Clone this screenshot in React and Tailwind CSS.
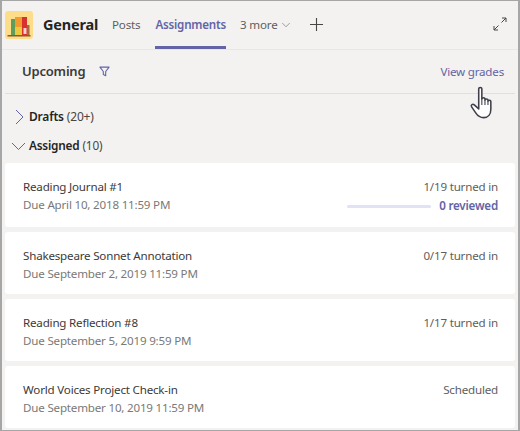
import { ChevronDown } from 'lucide-react';

const assignments = [
  { title: 'Reading Journal #1', due: 'Due April 10, 2018 11:59 PM', status: '1/19 turned in', reviewed: '0 reviewed' },
  { title: 'Shakespeare Sonnet Annotation', due: 'Due September 2, 2019 11:59 PM', status: '0/17 turned in' },
  { title: 'Reading Reflection #8', due: 'Due September 5, 2019 9:59 PM', status: '1/17 turned in' },
  { title: 'World Voices Project Check-in', due: 'Due September 10, 2019 11:59 PM', status: 'Scheduled' },
];

const BooksLogo = () => (
  <svg viewBox="0 0 28 28" className="w-[28px] h-[28px]">
    <rect width="28" height="28" rx="3" fill="#fedd8a" />
    <rect x="6" y="8" width="4" height="16" fill="#5f9e5a" />
    <rect x="10" y="6" width="7" height="18" fill="#f39a2e" />
    <rect x="10" y="16" width="7" height="8" fill="#ecc83c" />
    <rect x="17" y="6" width="5" height="18" fill="#d8322e" />
    <rect x="18.5" y="17" width="3" height="6" fill="#f4d0c8" />
    <rect x="22" y="14" width="2.5" height="10" fill="#a5683c" />
    <rect x="2.5" y="24" width="23" height="1.5" fill="#8a5a34" />
  </svg>
);

const FilterIcon = () => (
  <svg viewBox="0 0 12 12" fill="none" stroke="#6264a7" strokeWidth="1.2" className="w-[11px] h-[11px]">
    <path d="M1 1.2h10L7.3 6v4.6L4.7 9.4V6z" strokeLinejoin="round" />
  </svg>
);

const ExpandIcon = () => (
  <svg viewBox="0 0 14 14" fill="none" stroke="#484644" strokeWidth="1" className="w-[14px] h-[14px]">
    <path d="M8.5 5.5L13 1M9 1h4v4M5.5 8.5L1 13M1 9v4h4" />
  </svg>
);

const PlusIcon = () => (
  <svg viewBox="0 0 13 13" fill="none" stroke="#484644" strokeWidth="1.1" className="w-[13px] h-[13px]">
    <path d="M6.5 0v13M0 6.5h13" />
  </svg>
);

const TwistyRight = () => (
  <svg viewBox="0 0 9 16" fill="none" stroke="#6264a7" strokeWidth="1" className="w-[9px] h-[16px]">
    <path d="M1 1l7 7-7 7" />
  </svg>
);

const TwistyDown = () => (
  <svg viewBox="0 0 15 9" fill="none" stroke="#6264a7" strokeWidth="1" className="w-[15px] h-[9px]">
    <path d="M1 1l6.5 6.5L14 1" />
  </svg>
);

const HandCursor = () => (
  <svg viewBox="0 0 24 30" className="absolute left-[467px] top-[84px] w-[30px] h-[36px]">
    <path
      d="M7.6 3.2c0-1.4 2.6-1.4 2.6 0v8.4c0-1.3 2.6-1.3 2.6 0v1c0-1.3 2.5-1.3 2.5 0v1c0-1.2 2.4-1.2 2.4.2v6.4c0 4-2.2 7-6 7-3.4 0-5-1.6-6.6-4l-3.4-5c-1-1.5.9-2.8 2.2-1.6l3.7 3.3z"
      fill="#ffffff"
      stroke="#3f3f4b"
      strokeWidth="1.3"
      strokeLinejoin="round"
    />
    <path d="M10.2 11.6v5M12.8 12.6v4M15.3 13.6v3" stroke="#3f3f4b" strokeWidth="0.9" fill="none" />
  </svg>
);

const AssignmentCard = ({ item, tall }) => (
  <div className={`bg-white rounded-[3px] pl-[18px] pr-[17px] pt-[15px] flex justify-between ${tall ? 'h-[64px]' : 'h-[62px]'}`}>
    <div className="leading-[18px] text-[11.6px]">
      <div className="text-[#3b3a39]">{item.title}</div>
      <div className="text-[#7a7977]">{item.due}</div>
    </div>
    <div className="flex flex-col items-end leading-[18px] text-[11.6px] text-[#605e5c]">
      <div>{item.status}</div>
      {item.reviewed && (
        <div className="flex items-center gap-[8px] mt-[1px]">
          <div className="w-[84px] h-[3px] rounded-full bg-[#e2e2f6]"></div>
          <span className="font-semibold text-[#6264a7]">{item.reviewed}</span>
        </div>
      )}
    </div>
  </div>
);

export default function App() {
  return (
    <div className="relative w-[520px] h-[431px] overflow-hidden bg-[#f3f2f1] border border-[#a6a6a6] border-l-2 border-r-2 tracking-[-0.2px] font-['Noto_Sans','Open_Sans',sans-serif]">
      <header className="h-[49px] flex items-center border-b border-[#e8e7e6] pl-[3px] pr-[11px]">
        <BooksLogo />
        <h1 className="ml-[10px] text-[14.5px] font-bold text-[#252423]">General</h1>
        <nav className="flex items-stretch h-full ml-[14px] text-[11.6px] text-[#605e5c]">
          <span className="flex items-center">Posts</span>
          <span className="flex items-center ml-[15px] font-semibold text-[#6264a7] border-b-[3px] border-[#6264a7] pt-[3px]">Assignments</span>
          <span className="flex items-center ml-[14px]">
            3 more
            <ChevronDown className="w-[14px] h-[14px] ml-[2px] text-[#605e5c]" strokeWidth={1} />
          </span>
          <span className="flex items-center ml-[17px] mb-[2px]">
            <PlusIcon />
          </span>
        </nav>
        <div className="ml-auto mb-[3px]">
          <ExpandIcon />
        </div>
      </header>

      <div className="mx-[3px] h-[44px] flex items-center justify-between border-b border-[#e1dfdd] pl-[17px] pr-[11px]">
        <div className="flex items-center gap-[14px]">
          <span className="text-[13px] font-semibold text-[#3b3a39]">Upcoming</span>
          <FilterIcon />
        </div>
        <span className="text-[11.6px] text-[#6264a7]">View grades</span>
      </div>

      <div className="flex items-center h-[18px] mt-[14px] pl-[13px] text-[12px] text-[#252423]">
        <TwistyRight />
        <span className="ml-[5px] font-semibold">Drafts</span>
        <span className="ml-[3px] text-[#484644]">(20+)</span>
      </div>
      <div className="flex items-center h-[18px] mt-[11px] pl-[9px] text-[11.8px] text-[#252423]">
        <TwistyDown />
        <span className="ml-[3px] font-semibold">Assigned</span>
        <span className="ml-[3px] text-[#484644]">(10)</span>
      </div>

      <div className="flex flex-col gap-[5px] mt-[8px] mx-[3px]">
        {assignments.map((item, i) => (
          <AssignmentCard key={item.title} item={item} tall={i === 0} />
        ))}
      </div>

      <HandCursor />
    </div>
  );
}
